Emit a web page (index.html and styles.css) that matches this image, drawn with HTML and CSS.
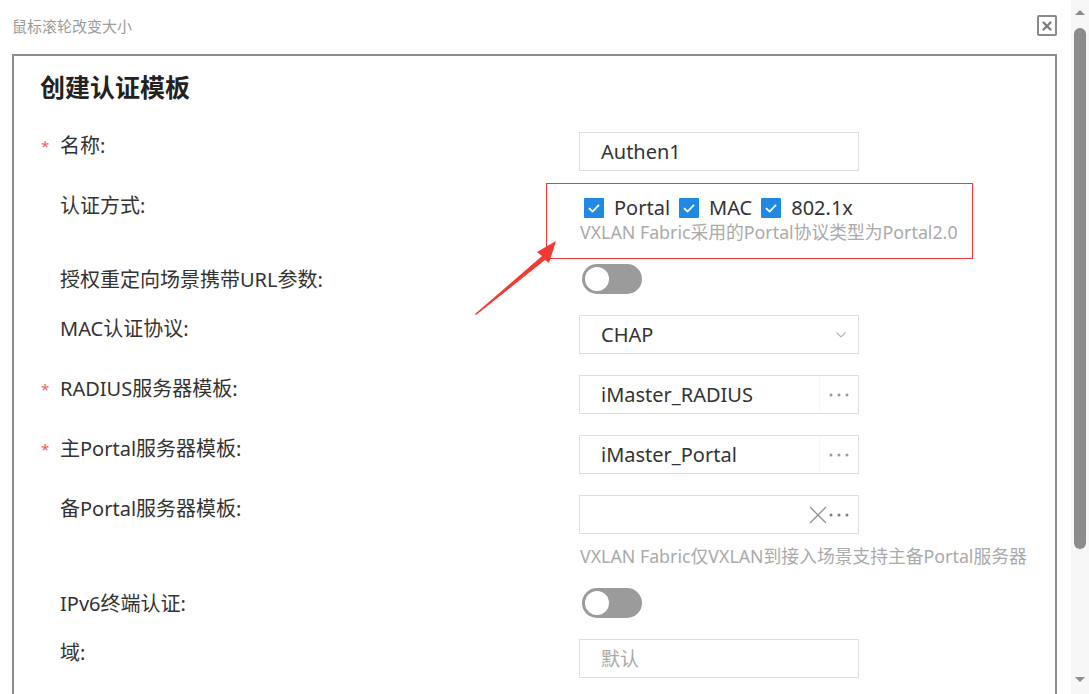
FILE: index.html
```html
<!DOCTYPE html>
<html lang="zh-CN">
<head>
<meta charset="utf-8">
<title>创建认证模板</title>
<link rel="stylesheet" href="styles.css">
</head>
<body>
<div class="page">
  <div class="main">
    <div class="header">
      <span class="hint">鼠标滚轮改变大小</span>
      <span class="close-btn">
        <svg width="12" height="12" viewBox="0 0 12 12"><path d="M2.5 2.5 L9.5 9.5 M9.5 2.5 L2.5 9.5" stroke="#7a7a7a" stroke-width="2.2" stroke-linecap="round"/></svg>
      </span>
    </div>
    <div class="panel">
      <h1 class="title">创建认证模板</h1>

      <div class="row row-first">
        <div class="label"><span class="star">*</span><span>名称:</span></div>
        <div class="control">
          <div class="input"><span class="value">Authen1</span></div>
        </div>
      </div>

      <div class="row">
        <div class="label"><span class="star"></span><span>认证方式:</span></div>
        <div class="control">
          <div class="checks">
            <span class="cb"><svg width="20" height="20" viewBox="0 0 20 20"><path d="M5 10.2 L8.6 13.6 L15 6.8" fill="none" stroke="#fff" stroke-width="1.8"/></svg></span><span class="cb-text">Portal</span>
            <span class="cb"><svg width="20" height="20" viewBox="0 0 20 20"><path d="M5 10.2 L8.6 13.6 L15 6.8" fill="none" stroke="#fff" stroke-width="1.8"/></svg></span><span class="cb-text">MAC</span>
            <span class="cb"><svg width="20" height="20" viewBox="0 0 20 20"><path d="M5 10.2 L8.6 13.6 L15 6.8" fill="none" stroke="#fff" stroke-width="1.8"/></svg></span><span class="cb-text">802.1x</span>
          </div>
          <div class="help">VXLAN Fabric采用的Portal协议类型为Portal2.0</div>
        </div>
      </div>

      <div class="row row-toggle">
        <div class="label"><span class="star"></span><span>授权重定向场景携带URL参数:</span></div>
        <div class="control">
          <span class="toggle"><span class="knob"></span></span>
        </div>
      </div>

      <div class="row">
        <div class="label"><span class="star"></span><span>MAC认证协议:</span></div>
        <div class="control">
          <div class="input"><span class="value">CHAP</span>
            <svg class="chevron" width="12" height="8" viewBox="0 0 12 8"><path d="M1.5 1.5 L6 6 L10.5 1.5" fill="none" stroke="#b5b5b5" stroke-width="1.2"/></svg>
          </div>
        </div>
      </div>

      <div class="row">
        <div class="label"><span class="star">*</span><span>RADIUS服务器模板:</span></div>
        <div class="control">
          <div class="input"><span class="value">iMaster_RADIUS</span>
            <span class="more"><svg width="22" height="6" viewBox="0 0 22 6"><circle cx="3" cy="3" r="1.5" fill="#9a9a9a"/><circle cx="11" cy="3" r="1.5" fill="#9a9a9a"/><circle cx="19" cy="3" r="1.5" fill="#9a9a9a"/></svg></span>
          </div>
        </div>
      </div>

      <div class="row">
        <div class="label"><span class="star">*</span><span>主Portal服务器模板:</span></div>
        <div class="control">
          <div class="input"><span class="value">iMaster_Portal</span>
            <span class="more"><svg width="22" height="6" viewBox="0 0 22 6"><circle cx="3" cy="3" r="1.5" fill="#9a9a9a"/><circle cx="11" cy="3" r="1.5" fill="#9a9a9a"/><circle cx="19" cy="3" r="1.5" fill="#9a9a9a"/></svg></span>
          </div>
        </div>
      </div>

      <div class="row">
        <div class="label"><span class="star"></span><span>备Portal服务器模板:</span></div>
        <div class="control">
          <div class="input"><span class="value"></span>
            <svg class="clear" width="18" height="18" viewBox="0 0 18 18"><path d="M1 1 L17 17 M17 1 L1 17" stroke="#8f8f8f" stroke-width="1.3"/></svg>
            <span class="more more-tight"><svg width="22" height="6" viewBox="0 0 22 6"><circle cx="3" cy="3" r="1.5" fill="#7f7f7f"/><circle cx="11" cy="3" r="1.5" fill="#7f7f7f"/><circle cx="19" cy="3" r="1.5" fill="#7f7f7f"/></svg></span>
          </div>
          <div class="help help-below">VXLAN Fabric仅VXLAN到接入场景支持主备Portal服务器</div>
        </div>
      </div>

      <div class="row row-toggle">
        <div class="label"><span class="star"></span><span>IPv6终端认证:</span></div>
        <div class="control">
          <span class="toggle"><span class="knob"></span></span>
        </div>
      </div>

      <div class="row">
        <div class="label"><span class="star"></span><span>域:</span></div>
        <div class="control">
          <div class="input"><span class="value placeholder">默认</span></div>
        </div>
      </div>
    </div>
  </div>
  <div class="scrollbar">
    <span class="arrow-up"></span>
    <span class="thumb"></span>
    <span class="arrow-down"></span>
  </div>

  <div class="note-box"></div>
  <svg class="note-arrow" width="100" height="90" viewBox="0 0 100 90">
    <polygon points="83,1 64,12 69,16 2,74 3,75 72,20 76,23" fill="#f23a35"/>
  </svg>
</div>
</body>
</html>
```

FILE: styles.css
```css
* { box-sizing: border-box; }

html, body {
  margin: 0;
  padding: 0;
  background: #ffffff;
}

body {
  font-family: "Noto Sans", "Noto Sans CJK SC", sans-serif;
  color: #333333;
  overflow: hidden;
}

.page {
  position: relative;
  width: 1089px;
  height: 694px;
  display: flex;
  overflow: hidden;
}

.main {
  width: 1071px;
  display: flex;
  flex-direction: column;
}

.header {
  height: 54px;
  display: flex;
  justify-content: space-between;
  align-items: flex-start;
  padding: 15px 14px 0 12px;
}

.hint {
  font-size: 15px;
  line-height: 22px;
  color: #9a9a9a;
}

.close-btn {
  width: 20px;
  height: 21px;
  border: 2px solid #8a8a8a;
  border-radius: 2px;
  display: flex;
  align-items: center;
  justify-content: center;
}

.panel {
  margin: 0 14px 0 12px;
  border: 2px solid #8c8c8c;
  border-bottom: none;
  flex: 1;
  padding: 15px 0 0 26px;
}

.title {
  margin: 0;
  font-size: 25px;
  line-height: 32px;
  font-weight: 700;
  color: #222222;
}

.row {
  display: flex;
  align-items: flex-start;
  margin-top: 21px;
}

.row-first {
  margin-top: 29px;
}

.row-toggle .label {
  padding-top: 2px;
}

.label {
  width: 539px;
  flex: none;
  display: flex;
  font-size: 20px;
  line-height: 28px;
  color: #333333;
}

.star {
  width: 20px;
  flex: none;
  color: #f06060;
  font-size: 15px;
  padding-left: 1px;
}

.control {
  width: 280px;
  flex: none;
}

.input {
  width: 280px;
  height: 39px;
  border: 1px solid #dedede;
  display: flex;
  align-items: center;
  padding-left: 21px;
  font-size: 20px;
  color: #333333;
}

.value {
  flex: 1;
  line-height: 28px;
}

.placeholder {
  color: #aaaaaa;
  font-size: 19px;
}

.chevron {
  margin-right: 11px;
}

.more {
  height: 100%;
  display: flex;
  align-items: center;
  padding: 0 8px 0 8px;
  border-left: 1px solid #f7f7f7;
}

.more-tight {
  border-left: none;
  padding-left: 0;
}

.clear {
  margin-right: 1px;
}

.checks {
  display: flex;
  align-items: center;
  height: 28px;
  margin-top: 2px;
  padding-left: 5px;
  font-size: 20px;
  white-space: nowrap;
}

.cb {
  width: 20px;
  height: 20px;
  background: #2189e3;
  border-radius: 1px;
  flex: none;
  display: flex;
}

.cb-text {
  margin: 0 9px 0 10px;
  line-height: 28px;
}

.help {
  font-size: 17.8px;
  line-height: 21px;
  color: #aaaaaa;
  white-space: nowrap;
  padding-left: 1px;
}

.help-below {
  margin-top: 12px;
  line-height: 21px;
}

.toggle {
  display: block;
  width: 60px;
  height: 30px;
  margin-left: 3px;
  border-radius: 15px;
  background: #9b9b9b;
  padding: 3px;
}

.knob {
  display: block;
  width: 24px;
  height: 24px;
  border-radius: 50%;
  background: #ffffff;
}

.scrollbar {
  width: 18px;
  background: #f7f7f7;
  display: flex;
  flex-direction: column;
  align-items: center;
  padding-top: 10px;
}

.arrow-up {
  width: 0;
  height: 0;
  border-left: 5px solid transparent;
  border-right: 5px solid transparent;
  border-bottom: 5px solid #8c8c8c;
}

.thumb {
  width: 12px;
  height: 521px;
  margin-top: 13px;
  border-radius: 6px;
  background: #8c8c8c;
}

.arrow-down {
  width: 0;
  height: 0;
  margin-top: 128px;
  border-left: 5px solid transparent;
  border-right: 5px solid transparent;
  border-top: 5px solid #8c8c8c;
}

.note-box {
  position: absolute;
  left: 546px;
  top: 183px;
  width: 427px;
  height: 76px;
  border: 1px solid #ef3b3b;
  pointer-events: none;
}

.note-arrow {
  position: absolute;
  left: 473px;
  top: 240px;
  pointer-events: none;
}
```
